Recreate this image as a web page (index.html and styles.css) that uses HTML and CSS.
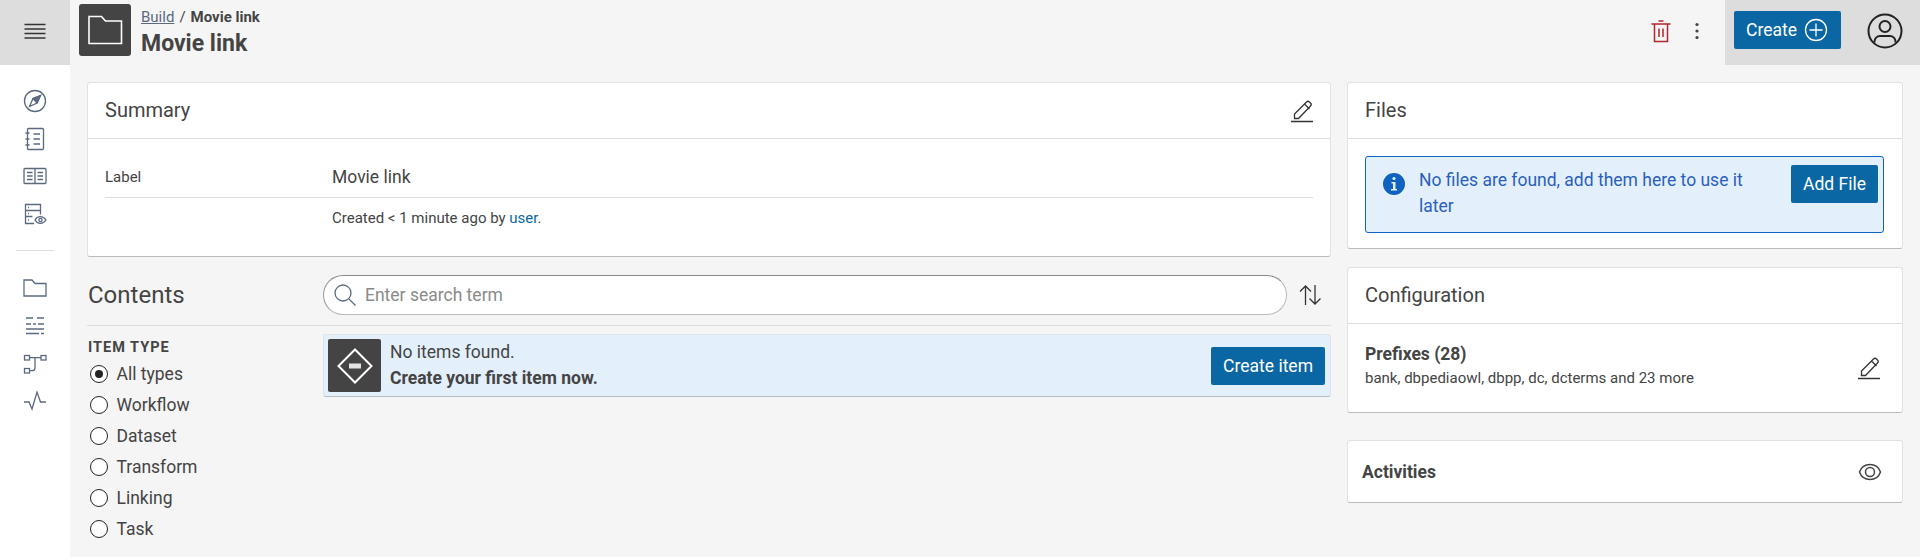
FILE: index.html
```html
<!DOCTYPE html>
<html lang="en">
<head>
  <meta charset="UTF-8">
  <title>Movie link</title>
  <link rel="stylesheet" href="styles.css">
</head>
<body>

  <aside class="rail">
    <div class="burger">
      <svg viewBox="0 0 24 24" width="24" height="24"><path d="M1.500 5.500h21M1.500 10h21M1.500 14.500h21M1.500 19h21" class="ico-dark"/></svg>
    </div>
    <nav class="rail-group">
      <svg class="rail-ico" viewBox="0 0 24 24"><circle cx="12" cy="12" r="10.500"/><path d="M17.500 6.500l-7.500 3-3.500 8 7.500-3.500z"/><path d="M17.500 6.500l-7.500 3 4 4.500z" class="ico-fill"/></svg>
      <svg class="rail-ico" viewBox="0 0 24 24"><rect x="4.500" y="1.500" width="16" height="21" rx="1"/><path d="M2.500 6h4M2.500 12h4M2.500 18h4M10.500 7h6.500M10.500 12h6.500M10.500 17h6.500"/></svg>
      <svg class="rail-ico" viewBox="0 0 24 24"><rect x="1" y="4.500" width="22" height="15" rx="1"/><path d="M12 4.500v15M4 8.500h5.500M4 12h5.500M4 15.500h5.500M14.500 8.500h5.500M14.500 12h5.500M14.500 15.500h5.500"/></svg>
      <svg class="rail-ico" viewBox="0 0 24 24"><path d="M11 21.500H2.500v-19h15v10M2.500 8.500h15M2.500 14.500h7M5 5.500h1M5 11.500h1M5 18h1"/><path d="M12 18c2.500-4.500 8-4.500 11 0-3 4.500-8.500 4.500-11 0z"/><circle cx="17.500" cy="18" r="1.600"/></svg>
    </nav>
    <div class="rail-divider"></div>
    <nav class="rail-group">
      <svg class="rail-ico" viewBox="0 0 24 24"><path d="M1 3h8l3 3.500h11v12.500H1z"/></svg>
      <svg class="rail-ico" viewBox="0 0 24 24"><path d="M3 4h7M14 4h7M3 10h5M10 10h3M15 10h6M3 15h18M3 19.500h13M18 19.500h3"/></svg>
      <svg class="rail-ico" viewBox="0 0 24 24"><rect x="1.500" y="3.500" width="5" height="4.500"/><rect x="18" y="3.500" width="5" height="4.500"/><rect x="1.500" y="16.500" width="5" height="4.500"/><path d="M6.500 5.700H18M12 5.700v10c0 2-1 3-3 3H6.500"/></svg>
      <svg class="rail-ico" viewBox="0 0 24 24"><path d="M1 13h5l3 7 5-17 3.500 10H23"/></svg>
    </nav>
  </aside>

  <div class="page">
    <header class="topbar">
      <div class="app-icon">
        <svg viewBox="0 0 36 36" width="36" height="36"><path d="M2 4.500h12.500l4 4.500H34.500v22.500H2z" class="ico-white"/></svg>
      </div>
      <div class="title-box">
        <div class="crumbs"><a href="#">Build</a><span class="sep">/</span><b>Movie link</b></div>
        <h1>Movie link</h1>
      </div>
      <div class="top-actions">
        <svg class="trash" viewBox="0 0 24 24" width="24" height="24"><path d="M2.500 5h19M9.500 2h5M5.500 5v17.500h13V5M10 9.500V18M14 9.500V18"/></svg>
        <svg class="dots" viewBox="0 0 6 24" width="6" height="24"><circle cx="3" cy="5.500" r="1.600"/><circle cx="3" cy="12" r="1.600"/><circle cx="3" cy="18.500" r="1.600"/></svg>
      </div>
      <div class="user-box">
        <button class="btn btn-create">Create
          <svg viewBox="0 0 24 24" width="24" height="24"><circle cx="12" cy="12" r="10.500"/><path d="M12 5.500v13M5.500 12h13"/></svg>
        </button>
        <svg class="avatar" viewBox="0 0 36 36" width="36" height="36"><circle cx="18" cy="18" r="16.500"/><circle cx="18" cy="13.500" r="5.500"/><path d="M7.500 29.500v-1c0-3 2.500-5.500 5.500-5.500h10c3 0 5.500 2.500 5.500 5.500v1"/></svg>
      </div>
    </header>

    <main class="content">
      <div class="col-left">
        <section class="card summary">
          <div class="card-head">
            <h2>Summary</h2>
            <svg class="edit" viewBox="0 0 24 24" width="24" height="24"><path d="M1 22.500h22M4.500 19.500v-4.500L16.500 3c1-1 2-1 3 0l1 1c1 1 1 2 0 3L8.500 19.500zM14.500 5l5 5"/></svg>
          </div>
          <div class="card-body">
            <div class="prop">
              <span class="prop-key">Label</span>
              <span class="prop-val">Movie link</span>
            </div>
            <div class="meta">Created &lt; 1 minute ago by <a href="#">user</a>.</div>
          </div>
        </section>

        <section class="contents">
          <div class="contents-head">
            <h2>Contents</h2>
            <div class="search">
              <svg viewBox="0 0 24 24" width="24" height="24"><circle cx="10" cy="10" r="8"/><path d="M16 16l6.500 6.500"/></svg>
              <span>Enter search term</span>
            </div>
            <svg class="sort" viewBox="0 0 24 24" width="24" height="24"><path d="M7.500 22V3M2 8.500l5.500-5.500 5.500 5.500M17 2v19M11.500 15.500l5.500 5.500 5.500-5.500"/></svg>
          </div>
          <div class="contents-body">
            <div class="facets">
              <h3>ITEM TYPE</h3>
              <label class="radio on"><i></i>All types</label>
              <label class="radio"><i></i>Workflow</label>
              <label class="radio"><i></i>Dataset</label>
              <label class="radio"><i></i>Transform</label>
              <label class="radio"><i></i>Linking</label>
              <label class="radio"><i></i>Task</label>
            </div>
            <div class="empty">
              <div class="empty-icon">
                <svg viewBox="0 0 36 36" width="36" height="36"><path d="M18 1.500L34.500 18 18 34.500 1.500 18z"/><rect x="12" y="15.500" width="12" height="5" class="fill"/></svg>
              </div>
              <div class="empty-text">
                <div>No items found.</div>
                <b>Create your first item now.</b>
              </div>
              <button class="btn">Create item</button>
            </div>
          </div>
        </section>
      </div>

      <div class="col-right">
        <section class="card files">
          <div class="card-head"><h2>Files</h2></div>
          <div class="card-body">
            <div class="info">
              <svg viewBox="0 0 24 24" width="24" height="24"><circle cx="12" cy="12" r="11"/><path d="M9.500 10h4v7H15v1.500H9V17h2v-5.500H9.500z" class="cut"/><circle cx="12" cy="6.500" r="1.600" class="cut"/></svg>
              <p>No files are found, add them here to use it later</p>
              <button class="btn">Add File</button>
            </div>
          </div>
        </section>

        <section class="card config">
          <div class="card-head"><h2>Configuration</h2></div>
          <div class="card-body">
            <div>
              <div class="cfg-title">Prefixes (28)</div>
              <div class="cfg-sub">bank, dbpediaowl, dbpp, dc, dcterms and 23 more</div>
            </div>
            <svg class="edit" viewBox="0 0 24 24" width="24" height="24"><path d="M1 22.500h22M4.500 19.500v-4.500L16.500 3c1-1 2-1 3 0l1 1c1 1 1 2 0 3L8.500 19.500zM14.500 5l5 5"/></svg>
          </div>
        </section>

        <section class="card activities">
          <b>Activities</b>
          <svg viewBox="0 0 24 24" width="24" height="24"><path d="M1.500 12c3.500-10 17.500-10 21 0-3.500 10-17.500 10-21 0z"/><circle cx="12" cy="12" r="4.500"/></svg>
        </section>
      </div>
    </main>
  </div>

</body>
</html>
```

FILE: styles.css
```css
* {
  box-sizing: border-box;
}
html, body {
  height: 100%;
}
body {
  margin: 0;
  display: flex;
  overflow: hidden;
  background: #f5f5f5;
  color: #444;
  font-family: Roboto, "Liberation Sans", sans-serif;
  font-size: 15px;
}
svg {
  display: block;
  flex: none;
  fill: none;
  stroke: #444;
  stroke-width: 1.5;
}
a {
  color: #0a67a3;
  text-decoration: none;
}
h1, h2, h3, p {
  margin: 0;
}

/* left rail */
.rail {
  width: 70px;
  flex: none;
  background: #fff;
}
.burger {
  height: 65px;
  padding-bottom: 3px;
  background: #ddd;
  display: flex;
  align-items: center;
  justify-content: center;
}
.ico-dark {
  stroke: #333;
  stroke-width: 1.300;
}
.rail-group {
  display: flex;
  flex-direction: column;
  align-items: center;
  gap: 13.5px;
}
.burger + .rail-group {
  padding-top: 24px;
}
.rail-ico {
  width: 24px;
  height: 24px;
  stroke: #5b6a80;
  stroke-width: 1.300;
}
.ico-fill {
  fill: #5b6a80;
}
.rail-divider {
  height: 1px;
  width: 38px;
  margin: 24px 0 26px 16px;
  background: #ddd;
}

.page {
  flex: 1;
  min-width: 0;
}

/* top bar */
.topbar {
  height: 65px;
  display: flex;
  align-items: flex-start;
}
.app-icon {
  width: 52px;
  height: 52px;
  margin: 4px 0 0 9px;
  background: #444;
  border-radius: 3px;
  display: flex;
  align-items: center;
  justify-content: center;
}
.ico-white {
  stroke: #fff;
  stroke-width: 1.600;
}
.title-box {
  margin-left: 10px;
  padding-top: 8px;
}
.crumbs {
  font-size: 15px;
  line-height: 18px;
  margin-bottom: 2px;
  color: #444;
}
.crumbs a {
  color: #5b6a80;
  text-decoration: underline;
}
.crumbs .sep {
  margin: 0 5px;
}
.crumbs b {
  font-weight: 700;
}
.topbar h1 {
  font-size: 23px;
  line-height: 32px;
  font-weight: 700;
}
.top-actions {
  margin-left: auto;
  height: 61px;
  display: flex;
  align-items: center;
  gap: 21px;
  padding-right: 25px;
}
.trash {
  stroke: #b3262e;
  stroke-width: 1.500;
}
.dots {
  fill: #444;
  stroke: none;
}
.user-box {
  width: 195px;
  height: 65px;
  background: #ddd;
  display: flex;
  align-items: flex-start;
  padding: 11px 0 0 9px;
}
.avatar {
  stroke: #222;
  stroke-width: 2;
  margin: 2px 0 0 26px;
}

/* buttons */
.btn {
  height: 38px;
  padding: 0 12px;
  border: none;
  border-radius: 2px;
  background: #0a67a3;
  color: #fff;
  font-family: inherit;
  font-size: 17.500px;
  display: inline-flex;
  align-items: center;
  flex: none;
}
.btn svg {
  stroke: #fff;
  stroke-width: 1.300;
}
.btn-create {
  width: 107px;
  gap: 7px;
}

/* main area */
.content {
  display: flex;
  gap: 16px;
  padding: 17px 17px 0;
}
.col-left {
  width: 1244px;
  flex: none;
}
.col-right {
  flex: 1;
  min-width: 0;
}
.card {
  background: #fff;
  border: 1px solid #e2e2e2;
  border-bottom-color: #bbb;
  border-radius: 3px;
}
.card-head {
  height: 56px;
  padding: 0 17px;
  border-bottom: 1px solid #ddd;
  display: flex;
  align-items: center;
  justify-content: space-between;
}
.card-head h2 {
  font-size: 20px;
  font-weight: 400;
  padding-bottom: 2px;
}
.edit {
  stroke: #333;
  stroke-width: 1.300;
}

/* summary */
.summary {
  height: 175px;
}
.summary .card-head .edit {
  margin-right: -1px;
}
.summary .card-body {
  padding: 0 17px;
}
.prop {
  height: 59px;
  padding-top: 17px;
  border-bottom: 1px solid #ddd;
  display: flex;
  align-items: center;
}
.prop-key {
  width: 227px;
  font-size: 15px;
}
.prop-val {
  font-size: 17.500px;
}
.meta {
  padding: 11px 0 0 227px;
  font-size: 15px;
}

/* contents */
.contents {
  padding-top: 18px;
}
.contents-head {
  height: 51px;
  padding-bottom: 11px;
  border-bottom: 1px solid #ddd;
  display: flex;
  align-items: center;
}
.contents-head h2 {
  width: 236px;
  padding-left: 1px;
  font-size: 24px;
  font-weight: 400;
}
.search {
  width: 964px;
  height: 40px;
  background: #fff;
  border: 1px solid #bbb;
  border-top-color: #888;
  border-left-color: #999;
  border-radius: 20px;
  padding: 1px 0 0 9px;
  display: flex;
  align-items: center;
  gap: 8px;
  color: #8a8a8a;
  font-size: 17.500px;
}
.search svg {
  stroke: #5b6a80;
  stroke-width: 1.300;
}
.sort {
  margin-left: 11px;
  stroke: #333;
  stroke-width: 1.300;
}
.contents-body {
  display: flex;
  padding-top: 8px;
}
.facets {
  width: 236px;
  flex: none;
  padding: 5px 0 0 1px;
}
.facets h3 {
  font-size: 14.500px;
  line-height: 17px;
  font-weight: 700;
  letter-spacing: 1px;
  margin-bottom: 2px;
}
.radio {
  height: 31px;
  display: flex;
  align-items: center;
  gap: 8.500px;
  font-size: 17.500px;
  padding-left: 2px;
}
.radio i {
  width: 18px;
  height: 18px;
  border: 1.500px solid #222;
  border-radius: 50%;
  background: #fff;
  display: flex;
  align-items: center;
  justify-content: center;
}
.radio.on i::after {
  content: "";
  width: 8px;
  height: 8px;
  border-radius: 50%;
  background: #222;
}
.empty {
  flex: 1;
  height: 63px;
  padding: 0 5px 0 4px;
  background: #e3f0fb;
  border: 1px solid #dde4ea;
  border-bottom-color: #b5bcc2;
  border-radius: 3px;
  display: flex;
  align-items: center;
}
.empty-icon {
  width: 53px;
  height: 53px;
  background: #444;
  border-radius: 2px;
  display: flex;
  align-items: center;
  justify-content: center;
}
.empty-icon svg {
  stroke: #fff;
  stroke-width: 2;
}
.empty-icon .fill {
  fill: #e3e3e3;
  stroke: none;
}
.empty-text {
  flex: 1;
  padding: 0 0 2px 9px;
  font-size: 17.500px;
  line-height: 26px;
}

/* files */
.files {
  height: 167px;
}
.files .card-body {
  padding: 17px 18px 0 17px;
}
.info {
  height: 77px;
  padding: 8px 5px 0 16px;
  background: #e3f0fb;
  border: 1px solid #0f62c0;
  border-radius: 3px;
  display: flex;
  align-items: flex-start;
  color: #2b5fbe;
}
.info svg {
  fill: #0f62c0;
  stroke: none;
  margin-top: 7px;
}
.info svg .cut {
  fill: #e3f0fb;
}
.info p {
  flex: 1;
  padding: 0 24px 0 13px;
  font-size: 17.500px;
  line-height: 26px;
  margin-top: 2px;
}

/* configuration */
.config {
  margin-top: 18px;
  height: 146px;
}
.config .card-body {
  height: 88px;
  padding: 0 17px 5px;
  display: flex;
  align-items: center;
  justify-content: space-between;
}
.cfg-title {
  font-size: 17.500px;
  font-weight: 700;
  line-height: 24px;
}
.cfg-sub {
  font-size: 15px;
  line-height: 24px;
}
.config .edit {
  margin: 5px 4px 0 0;
}

/* activities */
.activities {
  margin-top: 27px;
  height: 63px;
  padding: 0 20px 0 14px;
  display: flex;
  align-items: center;
  justify-content: space-between;
  font-size: 17.500px;
}
```
